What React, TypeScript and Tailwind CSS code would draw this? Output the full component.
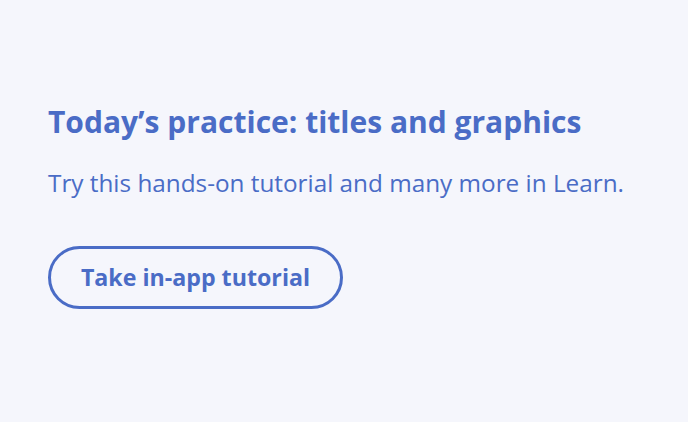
import React from "react";

export default function App() {
  return (
    <div className="w-[688px] h-[422px] bg-[#f5f6fc] overflow-hidden" style={{ fontFamily: "'Open Sans', sans-serif" }}>
      <div className="pt-[100px] pl-[48px] flex flex-col items-start">
        <h1 className="text-[30px] leading-[44px] font-bold text-[#4a6cc6]">Today’s practice: titles and graphics</h1>
        <p className="mt-[24px] text-[24.3px] leading-[30px] text-[#4a6cc6]">Try this hands-on tutorial and many more in Learn.</p>
        <button className="mt-[48px] w-[295px] h-[63px] rounded-full border-[3px] border-[#4a6cc6] text-[23.2px] font-bold text-[#4a6cc6] flex items-center justify-center">
          Take in-app tutorial
        </button>
      </div>
    </div>
  );
}
